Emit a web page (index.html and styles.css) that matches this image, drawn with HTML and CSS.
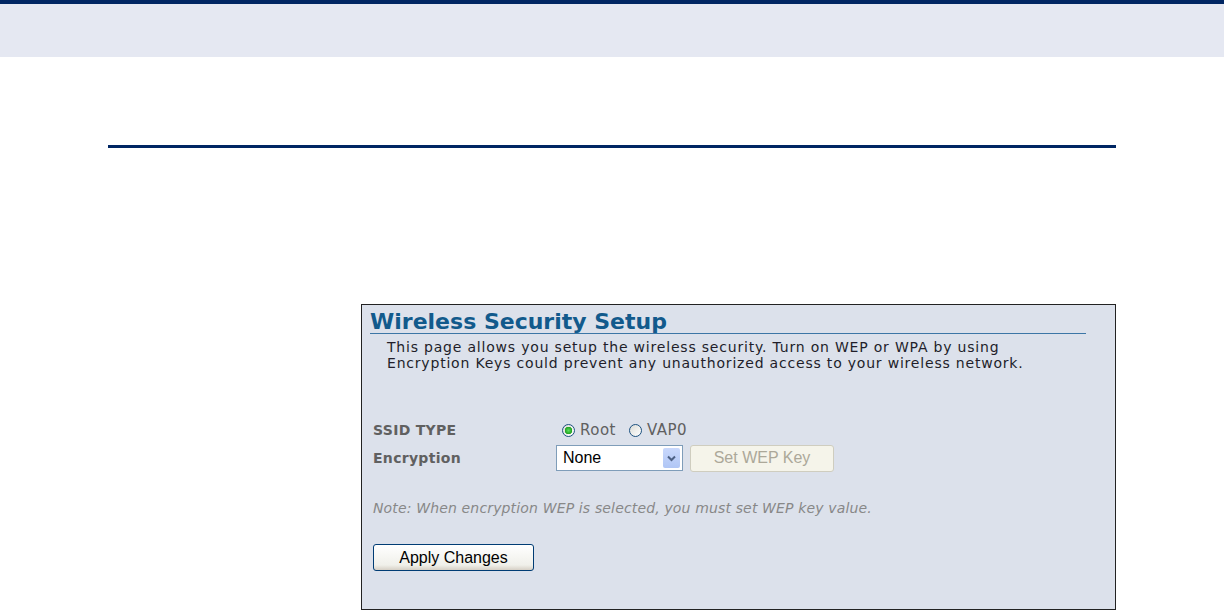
FILE: index.html
```html
<!DOCTYPE html>
<html>
    <head>
        <title>Wireless Security Setup</title>
        <link rel="stylesheet" href="styles.css">
    </head>

    <body>
        <!--Band at the top of the manual page-->
        <div class="PAGE_HEAD"></div>
        <div class="PAGE_RULE"></div>

        <!--Screenshot of the web management page-->
        <div class="SHOT">
            <div class="SHOT_TITLE">Wireless Security Setup</div>
            <div class="SHOT_DESC">
                This page allows you setup the wireless security. Turn on WEP or WPA by using<br/>
                Encryption Keys could prevent any unauthorized access to your wireless network.
            </div>

            <div class="SHOT_FORM">
                <div class="FIELD_ROW">
                    <div class="FIELD_LABEL">SSID TYPE</div>
                    <div class="FIELD_VALUE">
                        <label class="RADIO_ITEM"><input type="radio" name="ssid" checked> Root</label>
                        <label class="RADIO_ITEM"><input type="radio" name="ssid"> VAP0</label>
                    </div>
                </div>
                <div class="FIELD_ROW">
                    <div class="FIELD_LABEL">Encryption</div>
                    <div class="FIELD_VALUE">
                        <!--Drop down drawn by hand so it looks like the old XP one-->
                        <div class="SELECT_BOX">
                            <span class="SELECT_TEXT">None</span>
                            <span class="SELECT_ARROW">
                                <svg width="9" height="7" viewBox="0 0 9 7"><path d="M1 1.5 L4.5 5 L8 1.5" fill="none" stroke="#4d6185" stroke-width="2"/></svg>
                            </span>
                        </div>
                        <button class="WEP_BUTTON" disabled>Set WEP Key</button>
                    </div>
                </div>
            </div>

            <div class="SHOT_NOTE">Note: When encryption WEP is selected, you must set WEP key value.</div>

            <div class="SHOT_APPLY">
                <button class="APPLY_BUTTON">Apply Changes</button>
            </div>
        </div>
    </body>
</html>
```

FILE: styles.css
```css
/*Navy: #002663*/
/*Band: #E5E8F2*/
body {
    margin: 0;
    font-family: "DejaVu Sans", Verdana, sans-serif;
    background-color: white;
}
/*Top band and the rule under it*/
.PAGE_HEAD {
    height: 53px;
    border-top: 4px solid #002663;
    background-color: #E5E8F2;
}
.PAGE_RULE {
    height: 3px;
    width: 1008px;
    margin-top: 88px;
    margin-left: 108px;
    background-color: #002663;
}
/*The screenshot box*/
.SHOT {
    box-sizing: border-box;
    width: 755px;
    height: 306px;
    margin-top: 156px;
    margin-left: 361px;
    border: 1px solid #222222;
    background-color: #DCE1EB;
}
.SHOT_TITLE {
    margin-left: 8px;
    margin-right: 29px;
    padding-top: 5px;
    line-height: 23px;
    font-size: 22px;
    font-weight: bold;
    color: #125A8C;
    border-bottom: 1px solid #3C76A6;
}
.SHOT_DESC {
    margin-top: 5px;
    padding-left: 25px;
    font-size: 14px;
    line-height: 16px;
    letter-spacing: 0.8px;
    white-space: nowrap;
    color: #221E2A;
}
/*Form rows*/
.SHOT_FORM {
    margin-top: 46px;
    padding-left: 11px;
    display: flex;
    flex-direction: column;
    gap: 2px;
}
.FIELD_ROW {
    display: flex;
    align-items: center;
    height: 26px;
}
.FIELD_LABEL {
    width: 183px;
    font-size: 14px;
    font-weight: bold;
    letter-spacing: 0.3px;
    color: #606060;
}
.FIELD_VALUE {
    display: flex;
    align-items: center;
}
.RADIO_ITEM {
    display: flex;
    align-items: center;
    gap: 5px;
    margin-left: 6px;
    margin-right: 7px;
    font-size: 15px;
    letter-spacing: 0.5px;
    color: #606060;
}
.RADIO_ITEM input {
    appearance: none;
    box-sizing: border-box;
    width: 13px;
    height: 13px;
    margin: 0;
    border: 1px solid #1C5180;
    border-radius: 50%;
    background: linear-gradient(135deg, #DCDCD7, #FFFFFF);
}
.RADIO_ITEM input:checked {
    background: radial-gradient(circle, #5BE05B 0, #21A121 3.5px, transparent 4px), linear-gradient(135deg, #DCDCD7, #FFFFFF);
}
/*Drop down*/
.SELECT_BOX {
    box-sizing: border-box;
    display: flex;
    align-items: center;
    justify-content: space-between;
    width: 127px;
    height: 26px;
    padding: 2px;
    border: 1px solid #7F9DB9;
    background-color: white;
}
.SELECT_TEXT {
    padding-left: 4px;
    font-family: "Liberation Sans", Arial, sans-serif;
    font-size: 16px;
    color: black;
}
.SELECT_ARROW {
    display: flex;
    align-items: center;
    justify-content: center;
    width: 17px;
    height: 20px;
    border-radius: 2px;
    background: linear-gradient(#C9D8FC, #B0C6F5);
}
.WEP_BUTTON {
    width: 144px;
    height: 27px;
    margin-left: 7px;
    font-family: "Liberation Sans", Arial, sans-serif;
    font-size: 16px;
    color: #ACA899;
    border: 1px solid #CFCDBF;
    border-radius: 3px;
    background-color: #F5F4EA;
}
/*Note and apply*/
.SHOT_NOTE {
    margin-top: 29px;
    padding-left: 11px;
    font-size: 14px;
    line-height: 16px;
    letter-spacing: 0.15px;
    font-style: italic;
    color: #888888;
}
.SHOT_APPLY {
    margin-top: 28px;
    padding-left: 11px;
}
.APPLY_BUTTON {
    width: 161px;
    height: 27px;
    padding: 0;
    font-family: "Liberation Sans", Arial, sans-serif;
    font-size: 16px;
    color: black;
    border: 1px solid #003C74;
    border-radius: 3px;
    background: linear-gradient(#FFFFFF, #F0F0EA 80%, #D6D0C5);
}
```
